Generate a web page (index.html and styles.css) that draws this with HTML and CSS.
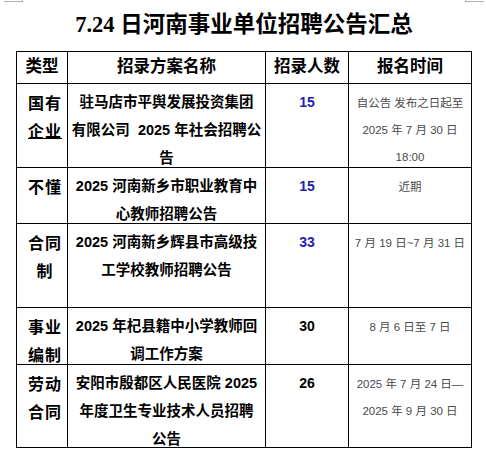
FILE: index.html
```html
<!DOCTYPE html>
<html lang="zh-CN">
<head>
<meta charset="utf-8">
<title>7.24日河南事业单位招聘公告汇总</title>
<link rel="stylesheet" href="styles.css">
</head>
<body>
<div class="page">
  <span class="corner corner-left"></span>
  <span class="corner corner-right"></span>
  <h1 class="title">7.24 日河南事业单位招聘公告汇总</h1>
  <table class="sheet">
    <colgroup>
      <col class="c-type">
      <col class="c-name">
      <col class="c-num">
      <col class="c-date">
    </colgroup>
    <thead>
      <tr class="head">
        <th>类型</th>
        <th>招录方案名称</th>
        <th>招录人数</th>
        <th>报名时间</th>
      </tr>
    </thead>
    <tbody>
      <tr class="tall">
        <td class="type"><div class="in">国有<br><u>企业</u></div></td>
        <td class="name"><div class="in">驻马店市平舆发展投资集团<br>有限公司&nbsp; 2025 年社会招聘公<br>告</div></td>
        <td class="num blue"><div class="in">15</div></td>
        <td class="date"><div class="in">自公告 发布之日起至<br>2025 年 7 月 30 日<br>18:00</div></td>
      </tr>
      <tr class="short">
        <td class="type"><div class="in">不懂</div></td>
        <td class="name"><div class="in">2025 河南新乡市职业教育中<br>心教师招聘公告</div></td>
        <td class="num blue"><div class="in">15</div></td>
        <td class="date"><div class="in">近期</div></td>
      </tr>
      <tr class="tall">
        <td class="type"><div class="in">合同<br>制</div></td>
        <td class="name"><div class="in">2025 河南新乡辉县市高级技<br>工学校教师招聘公告</div></td>
        <td class="num blue"><div class="in">33</div></td>
        <td class="date"><div class="in">7 月 19 日~7 月 31 日</div></td>
      </tr>
      <tr class="short2">
        <td class="type"><div class="in">事业<br>编制</div></td>
        <td class="name"><div class="in">2025 年杞县籍中小学教师回<br>调工作方案</div></td>
        <td class="num"><div class="in">30</div></td>
        <td class="date"><div class="in">8 月 6 日至 7 日</div></td>
      </tr>
      <tr class="tall2">
        <td class="type"><div class="in">劳动<br>合同</div></td>
        <td class="name"><div class="in">安阳市殷都区人民医院 2025<br>年度卫生专业技术人员招聘<br>公告</div></td>
        <td class="num"><div class="in">26</div></td>
        <td class="date"><div class="in">2025 年 7 月 24 日—<br>2025 年 9 月 30 日</div></td>
      </tr>
    </tbody>
  </table>
</div>
</body>
</html>
```

FILE: styles.css
```css
html, body {
  margin: 0;
  padding: 0;
  background: #ffffff;
}

.page {
  position: relative;
  width: 486px;
  height: 472px;
  padding: 0 0 0 16px;
  box-sizing: border-box;
  color: #000;
  font-family: "Liberation Sans", "Noto Sans CJK SC", sans-serif;
}

.corner {
  position: absolute;
  top: 0;
  width: 18px;
  height: 1px;
  border-bottom: 1px solid #b0b0b0;
}
.corner-left {
  left: 4px;
  border-right: 1px solid #b0b0b0;
}
.corner-right {
  left: 465px;
  border-left: 1px solid #b0b0b0;
}

.title {
  margin: 0;
  padding: 10px 0 0 0;
  height: 41px;
  width: 456px;
  text-align: center;
  font-family: "Liberation Serif", "Noto Sans CJK SC", serif;
  font-weight: 700;
  font-size: 22.5px;
  line-height: 30px;
}

.sheet {
  border-collapse: collapse;
  table-layout: fixed;
  width: 456px;
}

.c-type { width: 51px; }
.c-name { width: 198px; }
.c-num  { width: 83px; }
.c-date { width: 123px; }

.sheet th,
.sheet td {
  border: 1px solid #000;
  padding: 0;
  vertical-align: top;
  text-align: center;
}

.head { height: 32px; }
.head th {
  vertical-align: middle;
  font-family: "Noto Sans CJK SC", sans-serif;
  font-weight: 700;
  font-size: 16.5px;
  line-height: 24px;
  padding-bottom: 6px;
}

.tall   { height: 84px; }
.short  { height: 56px; }
.short2 { height: 57px; }
.tall2  { height: 83px; }

.in {
  padding-top: 4px;
  line-height: 28px;
  margin-bottom: -10px;
  white-space: nowrap;
}

.type .in {
  font-family: "Noto Sans CJK SC", sans-serif;
  font-weight: 700;
  font-size: 16px;
  letter-spacing: 1px;
  padding-left: 6px;
}

.name .in {
  font-weight: 700;
  font-size: 14.5px;
}

.num .in {
  font-weight: 700;
  font-size: 14px;
}
.blue { color: #2222b4; }

.date .in {
  padding-top: 6px;
  line-height: 27px;
  font-size: 11.5px;
  color: #4a4a4a;
}
```
